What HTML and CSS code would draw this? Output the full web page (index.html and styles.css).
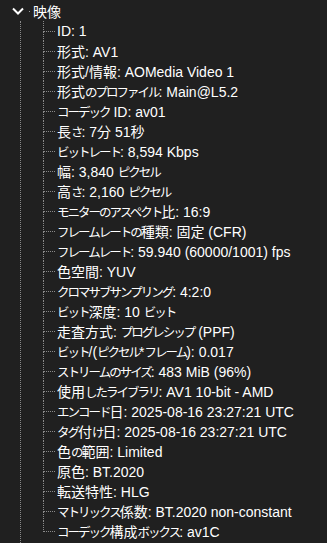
FILE: index.html
```html
<!DOCTYPE html>
<html>
<head>
    <meta charset="UTF-8">
    <title>映像</title>
    <link rel="stylesheet" href="styles.css">
</head>
<body>
    <div class="tree">
        <div class="node-head">
            <svg class="chevron" width="12" height="8" viewBox="0 0 12 8">
                <path d="M1 1.5 L6 6.5 L11 1.5" fill="none" stroke="#ffffff" stroke-width="2"/>
            </svg>
            <span class="focus-dot"></span>
            <span class="node-title">映像</span>
        </div>
        <div class="node-body">
            <!-- かなは細めに詰める -->
            <ul class="children">
                <li><span class="branch"><i></i><b></b></span><span class="label">ID: 1</span></li>
                <li><span class="branch"><i></i><b></b></span><span class="label">形式: AV1</span></li>
                <li><span class="branch"><i></i><b></b></span><span class="label">形式/情報: AOMedia Video 1</span></li>
                <li><span class="branch"><i></i><b></b></span><span class="label">形式<span class="k">のプロファイル</span>: Main@L5.2</span></li>
                <li><span class="branch"><i></i><b></b></span><span class="label"><span class="k">コーデック</span> ID: av01</span></li>
                <li><span class="branch"><i></i><b></b></span><span class="label">長<span class="k">さ</span>: 7分 51秒</span></li>
                <li><span class="branch"><i></i><b></b></span><span class="label"><span class="k">ビットレート</span>: 8,594 Kbps</span></li>
                <li><span class="branch"><i></i><b></b></span><span class="label">幅: 3,840 <span class="k">ピクセル</span></span></li>
                <li><span class="branch"><i></i><b></b></span><span class="label">高<span class="k">さ</span>: 2,160 <span class="k">ピクセル</span></span></li>
                <li><span class="branch"><i></i><b></b></span><span class="label"><span class="k">モニターのアスペクト</span>比: 16:9</span></li>
                <li><span class="branch"><i></i><b></b></span><span class="label"><span class="k">フレームレートの</span>種類: 固定 (CFR)</span></li>
                <li><span class="branch"><i></i><b></b></span><span class="label"><span class="k">フレームレート</span>: 59.940 (60000/1001) fps</span></li>
                <li><span class="branch"><i></i><b></b></span><span class="label">色空間: YUV</span></li>
                <li><span class="branch"><i></i><b></b></span><span class="label"><span class="k">クロマサブサンプリング</span>: 4:2:0</span></li>
                <li><span class="branch"><i></i><b></b></span><span class="label"><span class="k">ビット</span>深度: 10 <span class="k">ビット</span></span></li>
                <li><span class="branch"><i></i><b></b></span><span class="label">走査方式: <span class="k">プログレシップ</span> (PPF)</span></li>
                <li><span class="branch"><i></i><b></b></span><span class="label"><span class="k">ビット</span>/(<span class="k">ピクセル</span>*<span class="k">フレーム</span>): 0.017</span></li>
                <li><span class="branch"><i></i><b></b></span><span class="label"><span class="k">ストリームのサイズ</span>: 483 MiB (96%)</span></li>
                <li><span class="branch"><i></i><b></b></span><span class="label">使用<span class="k">したライブラリ</span>: AV1 10-bit - AMD</span></li>
                <li><span class="branch"><i></i><b></b></span><span class="label"><span class="k">エンコード</span>日: 2025-08-16 23:27:21 UTC</span></li>
                <li><span class="branch"><i></i><b></b></span><span class="label"><span class="k">タグ</span>付<span class="k">け</span>日: 2025-08-16 23:27:21 UTC</span></li>
                <li><span class="branch"><i></i><b></b></span><span class="label">色<span class="k">の</span>範囲: Limited</span></li>
                <li><span class="branch"><i></i><b></b></span><span class="label">原色: BT.2020</span></li>
                <li><span class="branch"><i></i><b></b></span><span class="label">転送特性: HLG</span></li>
                <li><span class="branch"><i></i><b></b></span><span class="label"><span class="k">マトリックス</span>係数: BT.2020 non-constant</span></li>
                <li><span class="branch"><i></i><b></b></span><span class="label"><span class="k">コーデック</span>構成<span class="k">ボックス</span>: av1C</span></li>
            </ul>
        </div>
    </div>
</body>
</html>
```
FILE: styles.css
```css
body {
    margin: 0;
    background-color: #202020;
    color: #ffffff;
    font-family: "Liberation Sans", "Noto Sans CJK JP", sans-serif;
    font-size: 14px;
    overflow: hidden;
}

.tree {
    height: 543px;
    display: flex;
    flex-direction: column;
}

.node-head {
    height: 21px;
    display: flex;
    align-items: center;
}

.chevron {
    margin-left: 12px;
    margin-top: 1px;
}

.focus-dot {
    width: 1px;
    height: 1px;
    background-color: #9a9a9a;
    margin-left: 5px;
    margin-top: 1px;
}

.node-title {
    margin-left: 3px;
}

.node-body {
    flex: 1;
    margin-left: 20px;
    border-left: 1px dotted #8a8a8a;
    padding-left: 22px;
}

.children {
    list-style: none;
    margin: 0;
    padding: 0;
}

.children li {
    height: 20px;
    display: flex;
    align-items: center;
}

.branch {
    width: 12px;
    height: 20px;
    display: flex;
    flex-direction: column;
    flex-shrink: 0;
}

.branch i {
    height: 10px;
    border-left: 1px dotted #8a8a8a;
    border-bottom: 1px dotted #8a8a8a;
}

.branch b {
    flex: 1;
    border-left: 1px dotted #8a8a8a;
}

.children li:last-child .branch b {
    border-left: none;
}

.label {
    margin-left: 2px;
    white-space: nowrap;
}

/* かな: 幅を詰める */
.k {
    font-size: 12.5px;
    letter-spacing: -2px;
}
```
